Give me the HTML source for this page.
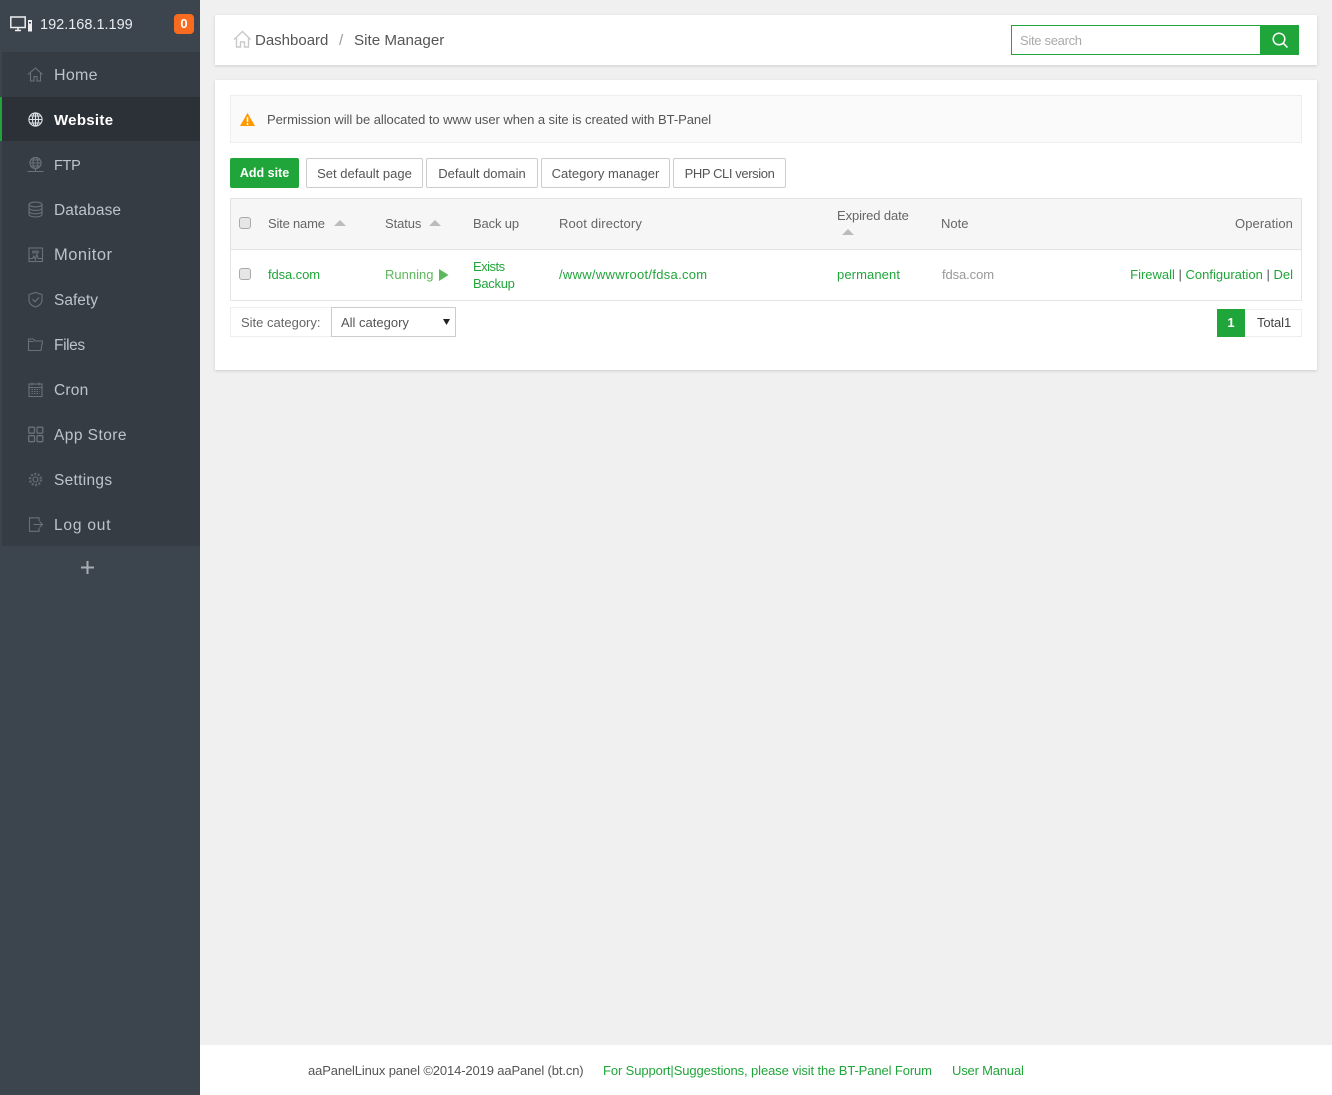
<!DOCTYPE html>
<html><head><meta charset="utf-8"><title>Site Manager</title>
<style>
html,body{margin:0;padding:0;width:1332px;height:1095px;overflow:hidden;background:#f0f0f0;font-family:"Liberation Sans",sans-serif;}
.a{position:absolute;white-space:nowrap;}
.t{position:absolute;white-space:nowrap;line-height:20px;font-size:13px;color:#666;}
.g{color:#20a53a;}
.m{position:absolute;left:54px;font-size:15.5px;line-height:20px;color:#bbc3cc;white-space:nowrap;}
.ic{position:absolute;left:27px;width:17px;height:17px;fill:none;stroke:#6a7279;stroke-width:1.1;}
.btn{position:absolute;top:158px;height:28px;border:1px solid #ccc;border-radius:2px;background:#fff;color:#555;font-size:13px;line-height:29px;text-align:center;white-space:nowrap;}
.tri{position:absolute;width:0;height:0;border-left:6px solid transparent;border-right:6px solid transparent;border-bottom:6px solid #bbb;}
.cb{position:absolute;left:239px;width:10px;height:10px;border:1px solid #aaa;border-radius:3px;background:#e6e6e6;}
</style></head><body>

<div class="a" style="left:0;top:0;width:200px;height:1095px;background:#3c444d"></div>
<div class="a" style="left:2px;top:52px;width:198px;height:494px;background:#353c44"></div>
<div class="a" style="left:0;top:97px;width:200px;height:44px;background:#2c3138"></div>
<div class="a" style="left:0;top:97px;width:2px;height:44px;background:#20a53a"></div>

<svg class="a" style="left:10px;top:16px" width="23" height="17" viewBox="0 0 23 17" fill="none" stroke="#eee"><rect x="0.8" y="1" width="14.4" height="10.5" stroke-width="1.5"/><path d="M5 14.5h6M8 12v2" stroke-width="1.5"/><rect x="18" y="4" width="4" height="11.5" fill="#eee" stroke="none"/><rect x="19" y="6" width="2" height="1.5" fill="#3c444d" stroke="none"/></svg>
<div class="a" style="left:40px;top:15px;font-size:14.5px;line-height:20px;color:#e8ecef">192.168.1.199</div>
<div class="a" style="left:174px;top:14px;width:20px;height:20px;border-radius:4px;background:#f96b1f;color:#fff;font-weight:bold;font-size:13px;line-height:20px;text-align:center">0</div>

<svg class="ic" style="top:66px" viewBox="0 0 17 17"><path d="M1 8.5 8.5 2l7 6.5M3.5 7v8h3.5v-4.5h3V15h3.5V7"/></svg>
<div class="m" style="top:66px;font-size:16px;letter-spacing:.3px">Home</div>
<svg class="ic" style="top:111px;stroke:#dfe3e6" viewBox="0 0 17 17"><circle cx="8.5" cy="8.5" r="6.6"/><ellipse cx="8.5" cy="8.5" rx="3" ry="6.6"/><path d="M2 8.5h13M3 5h11M3 12h11M8.5 2v13"/></svg>
<div class="m" style="top:111px;color:#fff;font-weight:bold;font-size:15px;letter-spacing:.3px">Website</div>
<svg class="ic" style="top:156px" viewBox="0 0 17 17"><circle cx="8.5" cy="7" r="5.6"/><ellipse cx="8.5" cy="7" rx="2.5" ry="5.6"/><path d="M3 7h11M4 4h9M4 10h9M0.500 15.500h16M8.500 12.500v3"/></svg>
<div class="m" style="top:156px;font-size:14.5px;letter-spacing:-.3px">FTP</div>
<svg class="ic" style="top:201px" viewBox="0 0 17 17"><ellipse cx="8.5" cy="3.5" rx="6.5" ry="2.4"/><path d="M2 3.500v10c0 1.400 3 2.400 6.500 2.400s6.500-1 6.500-2.400v-10M2 7c0 1.400 3 2.400 6.500 2.400S15 8.400 15 7M2 10.400c0 1.400 3 2.400 6.500 2.400s6.500-1 6.500-2.400"/></svg>
<div class="m" style="top:201px;letter-spacing:.1px">Database</div>
<svg class="ic" style="top:246px" viewBox="0 0 17 17"><rect x="2" y="2" width="13.500" height="13.500"/><path d="M2.500 12.500h3l1.300-2.500 1.500 3.500 1.500-5 1.300 4h3.900"/><rect x="5" y="4.500" width="7" height="3" fill="#5a6269" stroke="none"/></svg>
<div class="m" style="top:245px;font-size:16.5px;letter-spacing:.5px">Monitor</div>
<svg class="ic" style="top:291px" viewBox="0 0 17 17"><path d="M8.500 1.500 15 3.500v5.500c0 3.500-3 6-6.500 7C5 15 2 12.500 2 9V3.500z"/><path d="M5.500 8.300 8 10.800l4-4.300"/></svg>
<div class="m" style="top:291px">Safety</div>
<svg class="ic" style="top:336px" viewBox="0 0 17 17"><path d="M1.500 14.500V3h5l1.500 2h7.500l-1.500 9.500zM1.500 5.500h5"/></svg>
<div class="m" style="top:336px;letter-spacing:-.4px">Files</div>
<svg class="ic" style="top:381px" viewBox="0 0 17 17"><rect x="2" y="3" width="13" height="12.500"/><path d="M2 6.500h13M5 1.500v3M12 1.500v3"/><path d="M4.500 8.500h8M4.500 10.500h8M4.500 12.500h8" stroke-dasharray="1.500 1"/></svg>
<div class="m" style="top:381px;letter-spacing:.2px">Cron</div>
<svg class="ic" style="top:426px;stroke-width:1.300" viewBox="0 0 17 17"><rect x="1.700" y="1.200" width="5.800" height="6" rx="1"/><rect x="10" y="1.200" width="5.800" height="6" rx="1"/><rect x="1.700" y="9.700" width="5.800" height="6" rx="1"/><rect x="10" y="9.700" width="5.800" height="6" rx="1"/></svg>
<div class="m" style="top:426px;letter-spacing:.45px">App Store</div>
<svg class="ic" style="top:471px" viewBox="0 0 17 17"><circle cx="8.500" cy="8.500" r="2.500"/><circle cx="8.500" cy="8.500" r="5.500" stroke-width="2.400" stroke-dasharray="2 1.500" stroke="#5f676f"/></svg>
<div class="m" style="top:471px;letter-spacing:.3px">Settings</div>
<svg class="ic" style="top:516px" viewBox="0 0 17 17"><path d="M12 5V1.800H2.500v13.500H12V12M6.500 8.500h9M12.500 5.500l3 3-3 3"/></svg>
<div class="m" style="top:516px;letter-spacing:.8px">Log out</div>
<svg class="a" style="left:81px;top:561px" width="13" height="13"><path d="M0 6.500h13M6.500 0v13" stroke="#a7adb3" stroke-width="2"/></svg>

<div class="a" style="left:215px;top:15px;width:1102px;height:50px;background:#fff;box-shadow:0 1px 3px rgba(0,0,0,.15)"></div>
<svg class="a" style="left:233px;top:30px" width="19" height="18" viewBox="0 0 19 18" fill="none" stroke="#c9c9c9" stroke-width="1.400"><path d="M1 9.500 9.500 1.500l8 8M3.500 8v9h4v-5h4v5h4V8"/></svg>
<div class="a" style="left:255px;top:31px;font-size:15px;line-height:20px;color:#555">Dashboard</div>
<div class="a" style="left:339px;top:31px;font-size:15px;line-height:20px;color:#999">/</div>
<div class="a" style="left:354px;top:31px;font-size:15.2px;line-height:20px;color:#555">Site Manager</div>

<div class="a" style="left:1011px;top:25px;width:248px;height:28px;border:1px solid #20a53a;background:#fff"></div>
<div class="t" style="left:1020px;top:31px;color:#aaa;letter-spacing:-.3px">Site search</div>
<div class="a" style="left:1260px;top:25px;width:39px;height:30px;background:#20a53a"></div>
<svg class="a" style="left:1271px;top:31px" width="18" height="18" fill="none" stroke="#fff" stroke-width="1.500"><circle cx="8" cy="8" r="5.800"/><path d="M12.200 12.200 16.500 16.500"/></svg>

<div class="a" style="left:215px;top:80px;width:1102px;height:290px;background:#fff;box-shadow:0 1px 3px rgba(0,0,0,.15)"></div>
<div class="a" style="left:230px;top:95px;width:1070px;height:46px;background:#fafafa;border:1px solid #eee"></div>
<svg class="a" style="left:240px;top:113px" width="15" height="13"><path d="M7.500 0 15 13H0z" fill="#f90"/><path d="M7.500 4v5M7.500 10v2" stroke="#fff" stroke-width="1.500"/></svg>
<div class="t" style="left:267px;top:110px;color:#555;letter-spacing:-.05px">Permission will be allocated to www user when a site is created with BT-Panel</div>

<div class="btn" style="left:230px;width:69px;height:30px;border:0;background:#20a53a;color:#fff;font-weight:bold;font-size:12.5px;line-height:31px">Add site</div>
<div class="btn" style="left:306px;width:115px">Set default page</div>
<div class="btn" style="left:426px;width:110px">Default domain</div>
<div class="btn" style="left:541px;width:127px">Category manager</div>
<div class="btn" style="left:673px;width:111px;letter-spacing:-.4px">PHP CLI version</div>

<div class="a" style="left:230px;top:198px;width:1070px;height:101px;border:1px solid #e4e4e4;background:#fff"></div>
<div class="a" style="left:231px;top:199px;width:1070px;height:50px;background:#f6f6f6;border-bottom:1px solid #e4e4e4"></div>

<div class="cb" style="top:217px"></div>
<div class="t" style="left:268px;top:214px;letter-spacing:-.2px">Site name</div><div class="tri" style="left:334px;top:220px"></div>
<div class="t" style="left:385px;top:214px;letter-spacing:-.1px">Status</div><div class="tri" style="left:429px;top:220px"></div>
<div class="t" style="left:473px;top:214px;letter-spacing:-.15px">Back up</div>
<div class="t" style="left:559px;top:214px;letter-spacing:.15px">Root directory</div>
<div class="t" style="left:837px;top:206px;letter-spacing:-.1px">Expired date</div><div class="tri" style="left:842px;top:229px"></div>
<div class="t" style="left:941px;top:214px">Note</div>
<div class="t" style="right:39px;top:214px;letter-spacing:.1px">Operation</div>

<div class="cb" style="top:268px"></div>
<div class="t g" style="left:268px;top:265px;letter-spacing:-.1px">fdsa.com</div>
<div class="t" style="left:385px;top:265px;color:#5cb85c">Running</div>
<svg class="a" style="left:439px;top:269px" width="10" height="12"><path d="M0 0 9.500 6 0 12z" fill="#5cb85c"/></svg>
<div class="t g" style="left:473px;top:257px;letter-spacing:-.5px">Exists</div>
<div class="t g" style="left:473px;top:274px;letter-spacing:-.3px">Backup</div>
<div class="t g" style="left:559px;top:265px;letter-spacing:.29px">/www/wwwroot/fdsa.com</div>
<div class="t g" style="left:837px;top:265px;letter-spacing:.1px">permanent</div>
<div class="t" style="left:942px;top:265px;color:#999;letter-spacing:-.1px">fdsa.com</div>
<div class="t" style="right:39px;top:265px;color:#555"><span class="g">Firewall</span> | <span class="g">Configuration</span> | <span class="g">Del</span></div>

<div class="a" style="left:230px;top:307px;width:100px;height:28px;border:1px solid #eee;background:#fff"></div>
<div class="t" style="left:241px;top:313px;font-size:13px;color:#666">Site category:</div>
<div class="a" style="left:331px;top:307px;width:123px;height:28px;border:1px solid #ccc;background:#fff"></div>
<div class="t" style="left:341px;top:313px;color:#555">All category</div>
<svg class="a" style="left:443px;top:319px" width="7" height="6"><path d="M0 0h7L3.500 6z" fill="#222"/></svg>

<div class="a" style="left:1217px;top:309px;width:28px;height:28px;background:#20a53a;color:#fff;font-size:13px;font-weight:bold;line-height:28px;text-align:center">1</div>
<div class="a" style="left:1245px;top:309px;width:56px;height:26px;border:1px solid #eee;border-left:0;background:#fff"></div>
<div class="t" style="left:1257px;top:313px;color:#444;font-size:13px;letter-spacing:-.1px">Total1</div>

<div class="a" style="left:200px;top:1045px;width:1132px;height:50px;background:#fff"></div>
<div class="t" style="left:308px;top:1061px;color:#555;letter-spacing:-.13px">aaPanelLinux panel ©2014-2019 aaPanel (bt.cn)</div>
<div class="t g" style="left:603px;top:1061px;letter-spacing:-.11px">For Support|Suggestions, please visit the BT-Panel Forum</div>
<div class="t g" style="left:952px;top:1061px;letter-spacing:-.18px">User Manual</div>
</body></html>
